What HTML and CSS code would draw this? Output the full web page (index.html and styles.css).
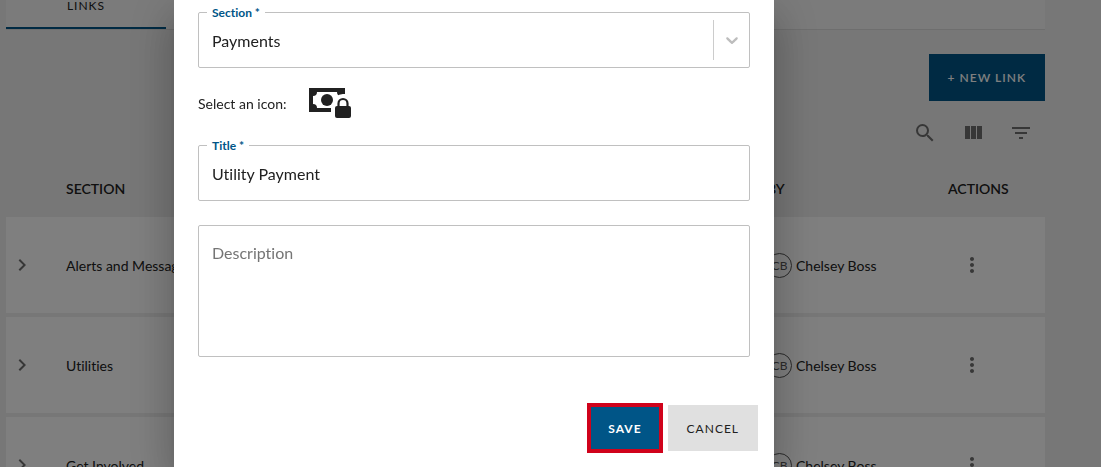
FILE: index.html
```html
<!DOCTYPE html>
<html lang="en">
<head>
    <meta charset="UTF-8">
    <meta name="viewport" content="width=device-width, initial-scale=1">
    <title>Links</title>
    <link rel="stylesheet" href="styles.css">
</head>
<body>
    <main class="page">
        <nav class="tabs">
            <a class="tab" href="#links">LINKS</a>
        </nav>

        <div class="page-actions">
            <button class="btn btn-new" type="button">+ NEW LINK</button>
        </div>

        <div class="toolbar">
            <button class="icon-btn" type="button" aria-label="Search">
                <svg class="icon" viewBox="0 0 24 24"><path d="M15.5 14h-.79l-.28-.27A6.471 6.471 0 0 0 16 9.5 6.5 6.5 0 1 0 9.5 16c1.61 0 3.09-.59 4.23-1.57l.27.28v.79l5 4.99L20.49 19l-4.99-5zm-6 0C7.01 14 5 11.99 5 9.5S7.01 5 9.5 5 14 7.01 14 9.5 11.99 14 9.5 14z"/></svg>
            </button>
            <button class="icon-btn" type="button" aria-label="Columns">
                <svg class="icon" viewBox="0 0 24 24"><path d="M10 18h5V5h-5v13zm-6 0h5V5H4v13zM16 5v13h5V5h-5z"/></svg>
            </button>
            <button class="icon-btn" type="button" aria-label="Filter">
                <svg class="icon" viewBox="0 0 24 24"><path d="M10 18h4v-2h-4v2zM3 6v2h18V6H3zm3 7h12v-2H6v2z"/></svg>
            </button>
        </div>

        <table class="links-table">
            <thead>
                <tr>
                    <th class="col-expand"></th>
                    <th>SECTION</th>
                    <th class="col-by">BY</th>
                    <th class="col-actions">ACTIONS</th>
                </tr>
            </thead>
            <tbody>
                <tr>
                    <td><button class="expand-btn" type="button" aria-label="Expand"><svg class="icon" viewBox="0 0 24 24"><path d="M10 6L8.59 7.41 13.17 12l-4.58 4.59L10 18l6-6z"/></svg></button></td>
                    <td>Alerts and Messages</td>
                    <td><div class="user"><span class="avatar">CB</span>Chelsey Boss</div></td>
                    <td><button class="icon-btn" type="button" aria-label="More"><svg class="icon" viewBox="0 0 24 24"><path d="M12 8c1.1 0 2-.9 2-2s-.9-2-2-2-2 .9-2 2 .9 2 2 2zm0 2c-1.1 0-2 .9-2 2s.9 2 2 2 2-.9 2-2-.9-2-2-2zm0 6c-1.1 0-2 .9-2 2s.9 2 2 2 2-.9 2-2-.9-2-2-2z"/></svg></button></td>
                </tr>
                <tr>
                    <td><button class="expand-btn" type="button" aria-label="Expand"><svg class="icon" viewBox="0 0 24 24"><path d="M10 6L8.59 7.41 13.17 12l-4.58 4.59L10 18l6-6z"/></svg></button></td>
                    <td>Utilities</td>
                    <td><div class="user"><span class="avatar">CB</span>Chelsey Boss</div></td>
                    <td><button class="icon-btn" type="button" aria-label="More"><svg class="icon" viewBox="0 0 24 24"><path d="M12 8c1.1 0 2-.9 2-2s-.9-2-2-2-2 .9-2 2 .9 2 2 2zm0 2c-1.1 0-2 .9-2 2s.9 2 2 2 2-.9 2-2-.9-2-2-2zm0 6c-1.1 0-2 .9-2 2s.9 2 2 2 2-.9 2-2-.9-2-2-2z"/></svg></button></td>
                </tr>
                <tr>
                    <td><button class="expand-btn" type="button" aria-label="Expand"><svg class="icon" viewBox="0 0 24 24"><path d="M10 6L8.59 7.41 13.17 12l-4.58 4.59L10 18l6-6z"/></svg></button></td>
                    <td>Get Involved</td>
                    <td><div class="user"><span class="avatar">CB</span>Chelsey Boss</div></td>
                    <td><button class="icon-btn" type="button" aria-label="More"><svg class="icon" viewBox="0 0 24 24"><path d="M12 8c1.1 0 2-.9 2-2s-.9-2-2-2-2 .9-2 2 .9 2 2 2zm0 2c-1.1 0-2 .9-2 2s.9 2 2 2 2-.9 2-2-.9-2-2-2zm0 6c-1.1 0-2 .9-2 2s.9 2 2 2 2-.9 2-2-.9-2-2-2z"/></svg></button></td>
                </tr>
            </tbody>
        </table>
    </main>

    <div class="overlay">
        <form class="dialog" role="dialog" aria-label="Edit link">
            <div class="field select-field">
                <label class="field-label" for="section">Section *</label>
                <select class="field-input" id="section">
                    <option>Payments</option>
                </select>
                <span class="select-arrow">
                    <svg class="arrow-icon" viewBox="0 0 20 20"><path d="M4.516 7.548c0.436-0.446 1.043-0.481 1.576 0l3.908 3.747 3.908-3.747c0.533-0.481 1.141-0.446 1.574 0 0.436 0.445 0.408 1.197 0 1.615-0.406 0.418-4.695 4.502-4.695 4.502-0.217 0.223-0.502 0.335-0.787 0.335s-0.57-0.112-0.789-0.335c0 0-4.287-4.084-4.695-4.502s-0.436-1.17 0-1.615z"/></svg>
                </span>
            </div>

            <div class="icon-picker">
                <span>Select an icon:</span>
                <button class="picked-icon" type="button" aria-label="Secure payment">
                    <svg class="payment-icon" viewBox="0 0 42 30">
                        <!-- bank note -->
                        <path fill="#212121" d="M0 0h36v24H0z"/>
                        <path fill="#fff" d="M8 4h20a4 4 0 0 0 4 4v8a4 4 0 0 0-4 4H8a4 4 0 0 0-4-4V8a4 4 0 0 0 4-4z"/>
                        <circle cx="18" cy="12" r="6" fill="#212121"/>
                        <!-- gap around the padlock -->
                        <path fill="#fff" d="M22 30V20a4 4 0 0 1 3-4a9 9 0 0 1 9-10h8V30z"/>
                        <!-- padlock -->
                        <path fill="none" stroke="#212121" stroke-width="2.200" d="M29.500 19v-3.500a4.500 4.500 0 0 1 9 0V19"/>
                        <rect x="26" y="18" width="16" height="12" rx="2" fill="#212121"/>
                    </svg>
                </button>
            </div>

            <div class="field">
                <label class="field-label" for="title">Title *</label>
                <input class="field-input" id="title" type="text" value="Utility Payment">
            </div>

            <div class="field">
                <textarea class="field-input field-area" placeholder="Description" aria-label="Description"></textarea>
            </div>

            <div class="dialog-actions">
                <button class="btn btn-save" type="button">SAVE</button>
                <button class="btn btn-cancel" type="button">CANCEL</button>
            </div>
        </form>
    </div>
</body>
</html>
```
FILE: styles.css
```css
* {
    box-sizing: border-box;
}

body {
    margin: 0;
    height: 100vh;
    overflow: hidden;
    background-color: #eee;
    font-family: Lato, sans-serif;
    font-size: 14px;
    font-variant-ligatures: none;
    color: #212121;
}

button,
input,
select,
textarea {
    font-family: inherit;
    font-variant-ligatures: inherit;
    color: inherit;
}

button {
    padding: 0;
    border: none;
    background: none;
    cursor: pointer;
}

.page {
    padding: 0 56px 0 6px;
}

.tabs {
    display: flex;
    height: 30px;
    background-color: #f6f6f6;
    border-bottom: 1px solid #ddd;
}

.tab {
    width: 160px;
    border-bottom: 2px solid #005587;
    color: #212121;
    font-size: 12px;
    letter-spacing: 1px;
    line-height: 12px;
    text-align: center;
    text-decoration: none;
}

.page-actions {
    display: flex;
    justify-content: flex-end;
    margin-top: 24px;
}

.btn {
    height: 46px;
    padding: 0 19px;
    font-size: 12px;
    letter-spacing: 1px;
}

.btn-new {
    height: 47px;
    background-color: #005587;
    color: #fff;
    font-weight: 600;
}

.toolbar {
    display: flex;
    justify-content: flex-end;
    margin-top: 8px;
}

.icon-btn {
    display: flex;
    align-items: center;
    justify-content: center;
    width: 48px;
    height: 48px;
}

.icon {
    display: block;
    width: 24px;
    height: 24px;
    fill: #6e6e6e;
}

.links-table {
    width: 100%;
    margin-top: 3px;
    border-spacing: 0 4px;
    table-layout: fixed;
}

.links-table th {
    height: 49px;
    padding: 0;
    font-weight: 600;
    text-align: left;
}

.links-table td {
    height: 96px;
    padding: 0;
    background-color: #fff;
}

.col-expand {
    width: 60px;
}

.col-by {
    width: 181px;
}

.col-actions {
    width: 97px;
}

.expand-btn {
    display: block;
    padding: 0 4px;
}

.user {
    display: flex;
    align-items: center;
    gap: 4px;
}

.avatar {
    display: flex;
    align-items: center;
    justify-content: center;
    width: 25px;
    height: 25px;
    border: 1px solid #555;
    border-radius: 50%;
    color: #555;
    font-size: 12px;
}

/* Dialog */
.overlay {
    position: fixed;
    inset: 0;
    display: flex;
    justify-content: center;
    padding-right: 153px;
    background-color: rgba(0, 0, 0, 0.5);
}

.dialog {
    width: 600px;
    padding: 12px 24px;
    background-color: #fff;
    box-shadow: 0 11px 15px -7px rgba(0, 0, 0, 0.2), 0 24px 38px 3px rgba(0, 0, 0, 0.14), 0 9px 46px 8px rgba(0, 0, 0, 0.12);
}

.field {
    position: relative;
    margin-bottom: 24px;
}

.field-label {
    position: absolute;
    top: -7px;
    left: 9px;
    padding: 0 5px;
    background-color: #fff;
    color: #005587;
    font-size: 12px;
    font-weight: bold;
    line-height: 16px;
}

.field-input {
    display: block;
    width: 100%;
    height: 56px;
    padding: 0 13px;
    border: 1px solid #c0c0c0;
    border-radius: 2px;
    background-color: #fff;
    font-size: 16px;
    outline: none;
    appearance: none;
}

.field-area {
    height: 132px;
    padding: 17px 13px;
    resize: none;
}

.field-area::placeholder {
    color: #757575;
}

.select-field {
    margin-bottom: 0;
}

.select-arrow {
    position: absolute;
    top: 8px;
    right: 0;
    display: flex;
    align-items: center;
    justify-content: center;
    width: 37px;
    height: 40px;
    border-left: 1px solid #ccc;
    pointer-events: none;
}

.arrow-icon {
    width: 20px;
    height: 20px;
    fill: #bdbdbd;
}

.icon-picker {
    display: flex;
    align-items: center;
    gap: 23px;
    height: 77px;
    padding-bottom: 7px;
}

.payment-icon {
    display: block;
    width: 42px;
    height: 30px;
}

.dialog-actions {
    display: flex;
    align-items: center;
    justify-content: flex-end;
    gap: 5px;
    margin: 46px -8px 0 0;
}

.btn-save {
    height: 50px;
    padding: 0 17px;
    border: 4px solid #d0021b;
    background-color: #005587;
    color: #fff;
    font-weight: bold;
}

.btn-cancel {
    background-color: #e0e0e0;
}
```
